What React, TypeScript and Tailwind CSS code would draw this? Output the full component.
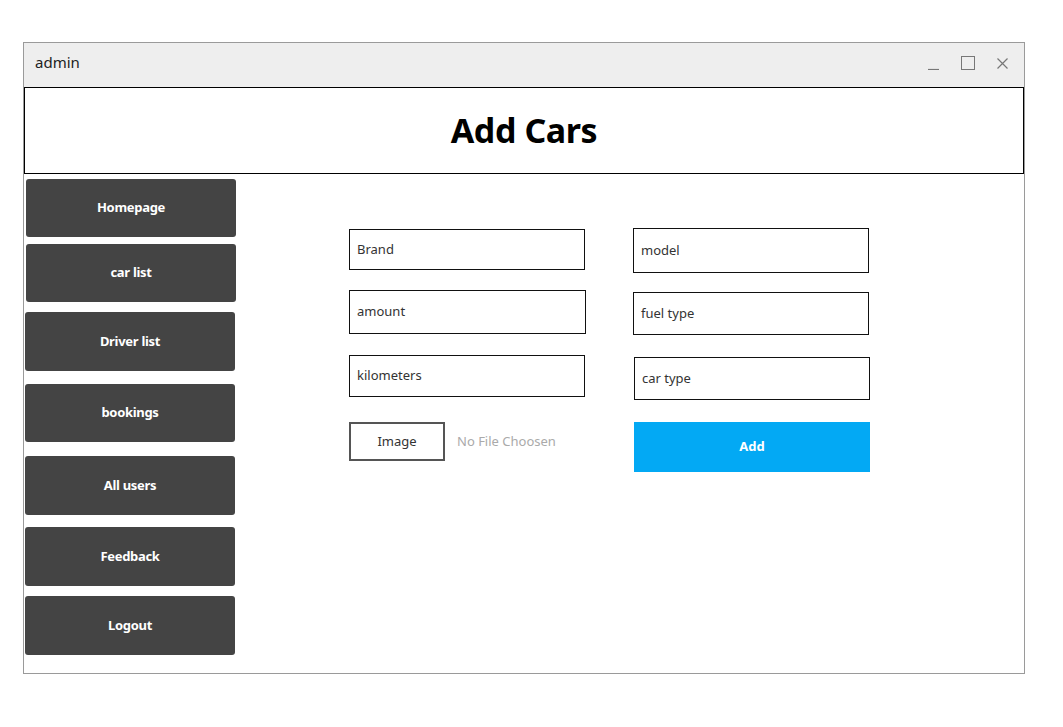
import React from "react";

const font = { fontFamily: '"Noto Sans", "Open Sans", sans-serif' };

function NavBtn({ label, className }: { label: string; className: string }) {
  return (
    <div
      className={`flex w-[210px] items-center justify-center rounded-[3px] bg-[#444444] text-[13px] font-bold tracking-[-0.3px] text-white ${className}`}
    >
      {label}
    </div>
  );
}

function Field({ label, className }: { label: string; className: string }) {
  return (
    <div
      className={`flex w-[236px] items-center border border-[#111] bg-white pl-[7px] text-[13px] text-[#333] ${className}`}
    >
      {label}
    </div>
  );
}

export default function App() {
  return (
    <div className="h-[727px] w-[1063px] bg-white pl-[23px] pt-[42px]" style={font}>
      <div className="flex h-[632px] w-[1002px] flex-col border border-[#9a9a9a] bg-white">
        {/* title bar */}
        <div className="flex h-[44px] shrink-0 items-center justify-between bg-[#eeeeee] pb-[6px] pl-[11px] pr-[15px]">
          <span className="text-[15px] text-[#222]">admin</span>
          <div className="flex items-center gap-[21px] pt-[2px]">
            <svg width="13" height="13" viewBox="0 0 13 13">
              <line x1="1" y1="12.5" x2="12" y2="12.5" stroke="#777" strokeWidth="1.2" />
            </svg>
            <svg width="14" height="14" viewBox="0 0 14 14">
              <rect x="0.5" y="0.5" width="13" height="13" fill="none" stroke="#777" strokeWidth="1" />
            </svg>
            <svg width="13" height="13" viewBox="0 0 13 13">
              <path d="M1.5 1.5 L11.5 11.5 M11.5 1.5 L1.5 11.5" stroke="#777" strokeWidth="1.2" />
            </svg>
          </div>
        </div>
        {/* header */}
        <div className="flex h-[87px] shrink-0 items-center justify-center border border-black">
          <h1 className="text-[34px] font-bold tracking-[-0.4px] text-black">Add Cars</h1>
        </div>
        {/* body */}
        <div className="flex flex-1">
          <div className="flex w-[213px] flex-col pl-[1px] pt-[5px]">
            <NavBtn label="Homepage" className="ml-[1px] h-[58px]" />
            <NavBtn label="car list" className="ml-[1px] mt-[7px] h-[58px]" />
            <NavBtn label="Driver list" className="mt-[10px] h-[59px]" />
            <NavBtn label="bookings" className="mt-[13px] h-[58px]" />
            <NavBtn label="All users" className="mt-[14px] h-[59px]" />
            <NavBtn label="Feedback" className="mt-[12px] h-[59px]" />
            <NavBtn label="Logout" className="mt-[10px] h-[59px]" />
          </div>
          <div className="ml-[112px] flex flex-col pt-[55px]">
            <Field label="Brand" className="h-[41px]" />
            <Field label="amount" className="mt-[20px] h-[44px] w-[237px]" />
            <Field label="kilometers" className="mt-[21px] h-[42px]" />
            <div className="mt-[25px] flex items-center">
              <div className="flex h-[39px] w-[96px] items-center justify-center border-2 border-[#555] text-[13px] text-[#333]">
                Image
              </div>
              <span className="ml-[12px] text-[13px] text-[#aaaaaa]">No File Choosen</span>
            </div>
          </div>
          <div className="ml-[47px] flex flex-col pt-[54px]">
            <Field label="model" className="h-[45px]" />
            <Field label="fuel type" className="mt-[19px] h-[43px]" />
            <Field label="car type" className="ml-px mt-[22px] h-[43px]" />
            <div className="ml-px mt-[22px] flex h-[50px] w-[236px] items-center justify-center bg-[#03a9f4] text-[13px] font-bold text-white">
              Add
            </div>
          </div>
        </div>
      </div>
    </div>
  );
}
